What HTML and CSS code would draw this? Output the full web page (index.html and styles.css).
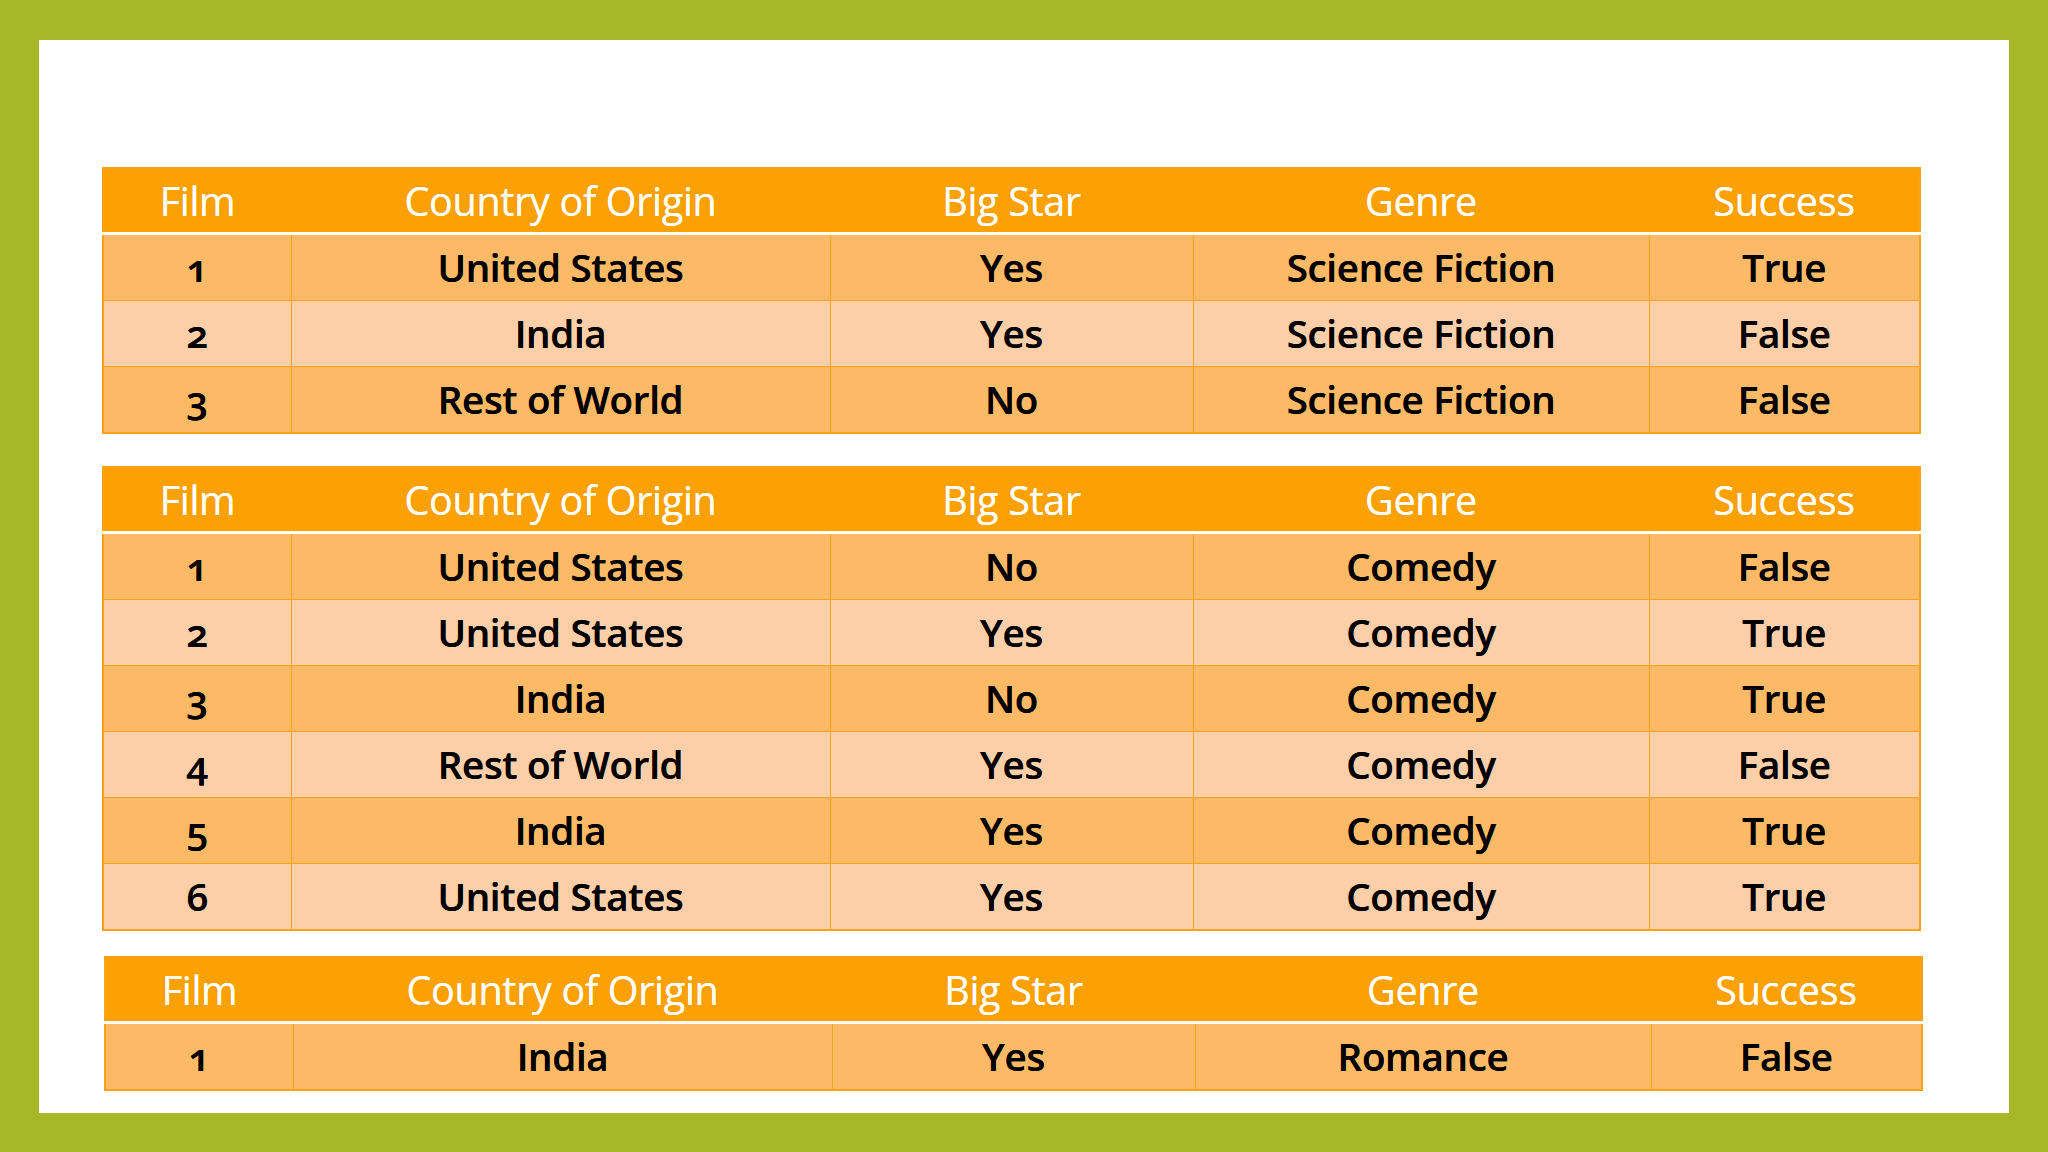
FILE: index.html
```html
<!DOCTYPE html>
<html lang="en">
<head>
<meta charset="utf-8">
<title>Film success tables</title>
<link rel="stylesheet" href="styles.css">
</head>
<body>
<div class="frame">
  <div class="slide">
    <table class="data t1">
      <colgroup><col class="c1"><col class="c2"><col class="c3"><col class="c4"><col class="c5"></colgroup>
      <thead><tr><th>Film</th><th>Country of Origin</th><th>Big Star</th><th>Genre</th><th>Success</th></tr></thead>
      <tbody>
        <tr class="odd"><td>1</td><td>United States</td><td>Yes</td><td>Science Fiction</td><td>True</td></tr>
        <tr class="even"><td>2</td><td>India</td><td>Yes</td><td>Science Fiction</td><td>False</td></tr>
        <tr class="odd"><td>3</td><td>Rest of World</td><td>No</td><td>Science Fiction</td><td>False</td></tr>
      </tbody>
    </table>
    <table class="data t2">
      <colgroup><col class="c1"><col class="c2"><col class="c3"><col class="c4"><col class="c5"></colgroup>
      <thead><tr><th>Film</th><th>Country of Origin</th><th>Big Star</th><th>Genre</th><th>Success</th></tr></thead>
      <tbody>
        <tr class="odd"><td>1</td><td>United States</td><td>No</td><td>Comedy</td><td>False</td></tr>
        <tr class="even"><td>2</td><td>United States</td><td>Yes</td><td>Comedy</td><td>True</td></tr>
        <tr class="odd"><td>3</td><td>India</td><td>No</td><td>Comedy</td><td>True</td></tr>
        <tr class="even"><td>4</td><td>Rest of World</td><td>Yes</td><td>Comedy</td><td>False</td></tr>
        <tr class="odd"><td>5</td><td>India</td><td>Yes</td><td>Comedy</td><td>True</td></tr>
        <tr class="even"><td>6</td><td>United States</td><td>Yes</td><td>Comedy</td><td>True</td></tr>
      </tbody>
    </table>
    <table class="data t3">
      <colgroup><col class="c1"><col class="c2"><col class="c3"><col class="c4"><col class="c5"></colgroup>
      <thead><tr><th>Film</th><th>Country of Origin</th><th>Big Star</th><th>Genre</th><th>Success</th></tr></thead>
      <tbody>
        <tr class="odd"><td>1</td><td>India</td><td>Yes</td><td>Romance</td><td>False</td></tr>
      </tbody>
    </table>
  </div>
</div>
</body>
</html>
```
FILE: styles.css
```css
html, body {
  margin: 0;
  padding: 0;
}
body {
  font-family: "Open Sans", "Noto Sans", sans-serif;
}
.frame {
  width: 2048px;
  height: 1152px;
  box-sizing: border-box;
  background: #a6b828;
  padding: 40px 39px 39px 39px;
}
.slide {
  background: #ffffff;
  height: 100%;
  box-sizing: border-box;
  padding: 127px 0 0 63px;
  display: flex;
  flex-direction: column;
}
.data {
  width: 1817px;
  table-layout: fixed;
  border-collapse: collapse;
  border: 2px solid #f8a21a;
  font-variant-numeric: oldstyle-nums;
}
.t2 {
  margin-top: 32px;
}
.t3 {
  margin-top: 25px;
  margin-left: 2px;
}
.c1 { width: 188px; }
.c2 { width: 539px; }
.c3 { width: 363px; }
.c4 { width: 456px; }
.c5 { width: 271px; }

.data th {
  background: #fca103;
  color: #ffffff;
  font-weight: 500;
  font-size: 39.5px;
  height: 60px;
  padding: 3px 0 0 0;
  line-height: 1;
  text-align: center;
  vertical-align: middle;
  border-bottom: 3px solid #ffffff;
  letter-spacing: -0.3px;
  text-shadow: 0 0 0.4px #ffffff;
}
.data td {
  color: #000000;
  font-weight: 600;
  font-size: 38.5px;
  height: 65px;
  padding: 0;
  line-height: 1;
  text-align: center;
  vertical-align: middle;
  border: 1.5px solid #f8a21a;
  letter-spacing: -0.3px;
  text-shadow: 0 0 0.5px #000000;
}
.odd td {
  background: #fdba66;
}
.even td {
  background: #fdcfa8;
}
```
